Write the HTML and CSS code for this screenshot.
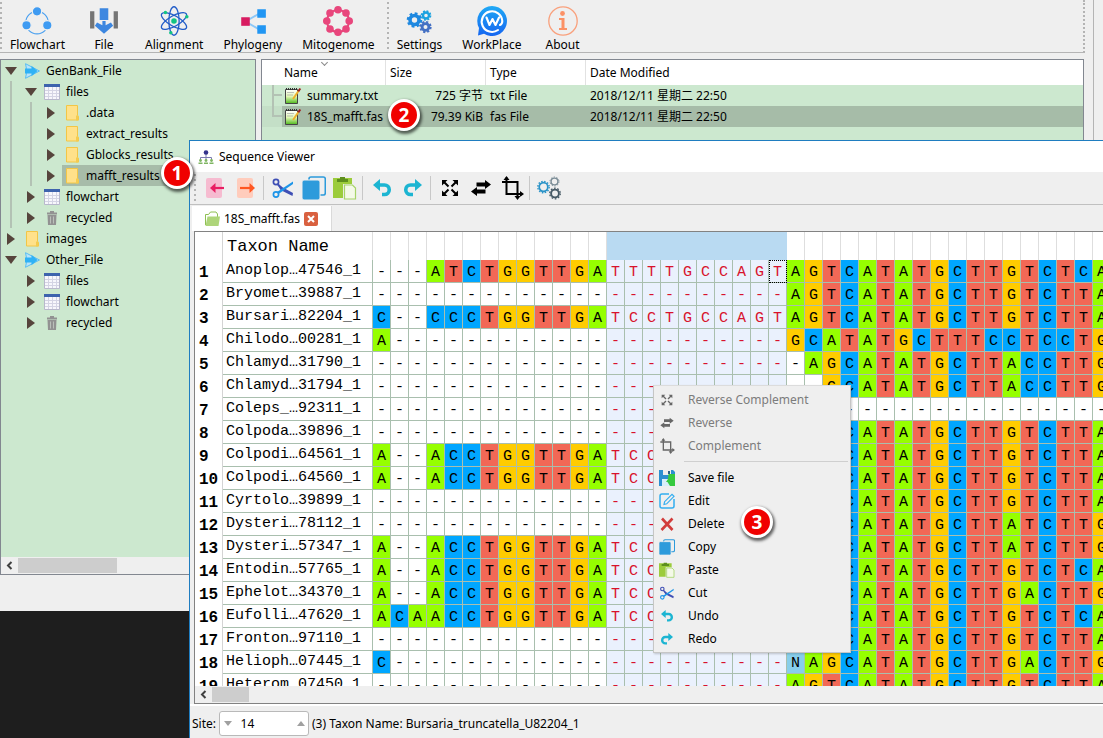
FILE: index.html
```html
<!DOCTYPE html>
<html lang="en">
<head>
<meta charset="utf-8">
<title>Sequence Viewer</title>
<link rel="stylesheet" href="styles.css">
</head>
<body>
<svg class="sprite" aria-hidden="true">
  <defs>
    <linearGradient id="g-blue" x1="0" y1="0" x2="0" y2="1"><stop offset="0" stop-color="#1fa9f5"/><stop offset="1" stop-color="#1666f0"/></linearGradient>
    <linearGradient id="g-note" x1="0" y1="0" x2="0" y2="1"><stop offset="0" stop-color="#ffffff"/><stop offset=".5" stop-color="#e2f7b4"/><stop offset="1" stop-color="#4db81c"/></linearGradient>
  </defs>
  <symbol id="i-flow" viewBox="0 0 28 28"><circle cx="14" cy="15.500" r="10.500" fill="none" stroke="#4aa0f0" stroke-width="1"/><g fill="#3f9bf2" stroke="#efefef" stroke-width="1.200"><circle cx="14" cy="5" r="4.400"/><circle cx="4.200" cy="18" r="4.400"/><circle cx="23.600" cy="18" r="4.400"/></g></symbol>
  <symbol id="i-import" viewBox="0 0 28 28"><path fill="#757575" d="M1 5h4v16H1zM23 5h4v16h-4z"/><path fill="#3d87e0" d="M10 2h8v11h-8zM12.500 14h3v4l5-2.500 2 3L14 26l-8.500-7.500 2-3 5 2.500z"/></symbol>
  <symbol id="i-atom" viewBox="0 0 28 28"><g fill="none" stroke="#1f5bc8" stroke-width="1.200"><ellipse cx="14" cy="14" rx="4.800" ry="13.300"/><ellipse cx="14" cy="14" rx="4.800" ry="13.300" transform="rotate(60 14 14)"/><ellipse cx="14" cy="14" rx="4.800" ry="13.300" transform="rotate(120 14 14)"/></g><g fill="#12c483"><circle cx="14" cy="14" r="2.600"/><circle cx="6" cy="6" r="1.600"/><circle cx="26" cy="10" r="1.600"/><circle cx="11" cy="25" r="1.600"/></g></symbol>
  <symbol id="i-share" viewBox="0 0 28 28"><path d="M7 14.500 20 7M7 14.500 20 22" stroke="#8cc7f7" stroke-width="1.800"/><path fill="#d81b60" d="M3 10.500h8v8H3z"/><path fill="#2196f3" d="M18 3h8v8h-8zM18 18h8v8h-8z"/></symbol>
  <symbol id="i-ring" viewBox="0 0 30 30"><circle cx="15" cy="15" r="11" fill="none" stroke="#e8467c" stroke-width="2"/><g fill="#e8467c"><circle cx="15" cy="3.800" r="3.800"/><circle cx="23" cy="7" r="3.800"/><circle cx="26.200" cy="15" r="3.800"/><circle cx="23" cy="23" r="3.800"/><circle cx="15" cy="26.200" r="3.800"/><circle cx="7" cy="23" r="3.800"/><circle cx="3.800" cy="15" r="3.800"/><circle cx="7" cy="7" r="3.800"/></g></symbol>
  <symbol id="i-gears" viewBox="0 0 30 30"><g fill="none"><circle cx="10.500" cy="14" r="4.500" stroke="#1e88e0" stroke-width="3.600"/><circle cx="10.500" cy="14" r="6.700" stroke="#1e88e0" stroke-width="2.200" stroke-dasharray="2.800 2.462"/><circle cx="22" cy="9.500" r="3" stroke="#1aa2e0" stroke-width="2.400"/><circle cx="22" cy="9.500" r="4.500" stroke="#1aa2e0" stroke-width="1.700" stroke-dasharray="1.900 1.634"/><circle cx="21.500" cy="21" r="3.400" stroke="#4470c4" stroke-width="2.800"/><circle cx="21.500" cy="21" r="5.200" stroke="#4470c4" stroke-width="1.900" stroke-dasharray="2.200 1.884"/></g></symbol>
  <symbol id="i-work" viewBox="0 0 30 30"><path fill="url(#g-blue)" d="M15 0a15 15 0 1 1-8 27.700L1 29.500l1-7.500A15 15 0 0 1 15 0z"/><path fill="none" stroke="#fff" stroke-width="2.100" stroke-linecap="round" stroke-linejoin="round" d="M21 24A10.300 10.300 0 1 1 25.300 15q0 3-2.300 4M9.500 11.500l3 7.500 3-6 3 6 3.500-7.500"/></symbol>
  <symbol id="i-info" viewBox="0 0 30 30"><circle cx="15" cy="15" r="14.200" fill="none" stroke="#f9a07c" stroke-width="1.300"/><circle cx="14.500" cy="7.500" r="2.400" fill="#fb9166"/><path fill="#fb9166" d="M11 12h5.500v10H19v2h-8v-2h2.500v-8H11z"/></symbol>
  <symbol id="i-project" viewBox="0 0 16 16"><path fill="#b8e4fb" stroke="#58bdf3" d="M1.500.700 15.500 8l-14 7.300.8-4.300v-6z"/><path fill="#2fb2f5" d="M1 5.500h6.500V2.800L13.500 8l-6 5.200v-2.700H1z"/></symbol>
  <symbol id="i-table" viewBox="0 0 16 16"><path fill="#f7f7fc" stroke="#b8b8cc" d="M.500.500h15v15H.500z"/><path stroke="#d4d4e4" d="M4.500 3v12M8.500 3v12M12.500 3v12M1 6.500h14M1 9.500h14M1 12.500h14"/><path fill="#3d63ad" d="M0 0h16v3H0z"/></symbol>
  <symbol id="i-folder" viewBox="0 0 16 16"><path fill="#ffe18a" stroke="#f2c646" d="M2.500.500h11v10l1 1v3.500h-12z"/><path fill="#f4cc50" d="M12 10.500h2.500v5H12z"/></symbol>
  <symbol id="i-trash" viewBox="0 0 16 16"><path fill="#929292" d="M3 2.500h10v2H3zM6 1h4v2H6zM3.500 5h9l-.500 10h-8z"/><path stroke="#c4ccc4" d="M6.500 6.500v7M9.500 6.500v7" stroke-width=".8"/></symbol>
  <symbol id="i-note" viewBox="0 0 18 18"><path fill="url(#g-note)" stroke="#444" d="M1.500 2.500h12v14h-12z"/><path stroke="#333" stroke-dasharray="1 1" stroke-width="2" d="M2 2h11"/><path stroke="#a5a5a5" stroke-width=".7" d="M3 5.500h7M3 8h6"/><path stroke="#efb12c" stroke-width="2" d="m9 12 5.500-8"/><path stroke="#9c2020" stroke-width="2" d="m14.300 4.300 2-2.800"/></symbol>
  <symbol id="i-tree" viewBox="0 0 16 16"><path fill="none" stroke="#7a7ab0" d="M8 4v7M2.500 11V8.500h11V11"/><circle cx="8" cy="3.500" r="2.300" fill="#34338c"/><g fill="#7fb562"><circle cx="2.500" cy="11.500" r="1.400"/><circle cx="8" cy="11.500" r="1.400"/><circle cx="13.500" cy="11.500" r="1.400"/><path d="M.500 13.500h4V15h-4zM6 13.500h4V15H6zM11.500 13.500h4V15h-4z"/></g></symbol>
  <symbol id="i-left" viewBox="0 0 24 24"><rect x="3" y="2" width="16" height="20" rx="2" fill="#f6bbd0"/><path fill="none" stroke="#e91e63" stroke-width="2.200" d="M21 12H9"/><path fill="#e91e63" d="M12.500 7v10L7 12z"/></symbol>
  <symbol id="i-right" viewBox="0 0 24 24"><rect x="3" y="2" width="16" height="20" rx="2" fill="#ffccbc"/><path fill="none" stroke="#ff5722" stroke-width="2.200" d="M6 12h12"/><path fill="#ff5722" d="M15.500 7v10l5.500-5z"/></symbol>
  <symbol id="i-cut" viewBox="0 0 24 24"><path fill="#3f4fb5" d="m6.500 8.500 15.500 8.500-.500 3L9.500 14z"/><path fill="#1e95e8" d="M22 5.500 6 16l1.500 2L22 8z"/><circle cx="5" cy="6" r="2.600" fill="none" stroke="#3f4fb5" stroke-width="1.700"/><circle cx="5" cy="18.500" r="2.600" fill="none" stroke="#1e95e8" stroke-width="1.700"/><path stroke="#3f4fb5" stroke-width="2" d="m6.500 8 4 4"/></symbol>
  <symbol id="i-copy" viewBox="0 0 24 24"><rect x="7" y="1" width="16.300" height="18" rx="2" fill="#efefef" stroke="#2d9bdb" stroke-width="1.600"/><rect x="0" y="4" width="18" height="20" rx="2" fill="#2d9bdb" stroke="#efefef" stroke-width="1"/></symbol>
  <symbol id="i-paste" viewBox="0 0 24 24"><path fill="#9ccc3c" d="M0 2h19v6h-9v14H0z"/><path fill="#5e8f1e" d="M4 3h3V1h5v2h3v3H4z"/><path fill="#f4f9e8" stroke="#a6d468" stroke-width="1.200" d="M11.500 9h8l3 3v11h-11z"/></symbol>
  <symbol id="i-undo" viewBox="0 0 24 24"><path fill="none" stroke="#1cb5d2" stroke-width="3.600" d="M7 9h7.500a4.700 4.700 0 0 1 0 9.500H12"/><path fill="#1cb5d2" d="M10 3v12L3 9z"/></symbol>
  <symbol id="i-redo" viewBox="0 0 24 24"><path fill="none" stroke="#1cb5d2" stroke-width="3.600" d="M17 9H9.500a4.700 4.700 0 0 0 0 9.500H12"/><path fill="#1cb5d2" d="M14 3v12l7-6z"/></symbol>
  <symbol id="i-expand" viewBox="0 0 24 24"><path stroke="currentColor" stroke-width="2" d="m6 6 4.500 4.500M18 6l-4.500 4.500M6 18l4.500-4.500M18 18l-4.500-4.500"/><path fill="currentColor" d="M4 4h5.500L4 9.500zM20 4h-5.500L20 9.500zM4 20h5.500L4 14.500zM20 20h-5.500l5.500-5.500z"/></symbol>
  <symbol id="i-swap" viewBox="0 0 24 24"><path fill="currentColor" d="M22 8.500 16 4v2.500H7.500v4H16V13zM2 15.500l6 4.500v-2.500h8.500v-4H8V11z"/></symbol>
  <symbol id="i-crop" viewBox="0 0 24 24"><path fill="none" stroke="currentColor" stroke-width="2" d="M6.500 1.500v16.500H22M2 6h15.500v16"/><path fill="currentColor" d="m6.500 0 3 4h-6zM24 18l-4-3v6zM17.500 24l-3-4h6z"/></symbol>
  <symbol id="i-cogs" viewBox="0 0 24 24"><g fill="none"><circle cx="6.500" cy="11" r="4.300" stroke="#2a93c8" stroke-width="1.700"/><circle cx="6.500" cy="11" r="5.700" stroke="#2a93c8" stroke-width="1.400" stroke-dasharray="1.500 1.480"/><circle cx="17.500" cy="5.500" r="3.400" stroke="#7a8c96" stroke-width="1.400"/><circle cx="17.500" cy="5.500" r="4.500" stroke="#7a8c96" stroke-dasharray="1.400 1.430"/><circle cx="18" cy="17.500" r="3.900" stroke="#475a66" stroke-width="1.900"/><circle cx="18" cy="17.500" r="5.300" stroke="#475a66" stroke-width="1.300" stroke-dasharray="1.700 1.630"/></g></symbol>
  <symbol id="i-open" viewBox="0 0 16 16"><path fill="#fff" stroke="#8ec053" d="M1.500 14V3.500h3L6.500 1H12l1.500 2v3"/><path fill="#aed57a" d="M3.500 5.500H16l-1.500 9.500H1.500z"/></symbol>
  <symbol id="i-save" viewBox="0 0 16 16"><path fill="#2b8fd0" d="M0 0h14l2 2v14H0z"/><path fill="#eee" d="M4 0h8v5H4z"/><path fill="#2b5f86" d="M9 1h2v3H9z"/><path fill="#d8eef8" d="M3 9h9v7H3z"/><path fill="#36c93f" d="M9.500 4H16v12h-5l-2.500-4H7l2-3z"/></symbol>
  <symbol id="i-edit" viewBox="0 0 16 16"><path fill="none" stroke="#33aef0" stroke-width="1.500" d="M10 1H3a2 2 0 0 0-2 2v10a2 2 0 0 0 2 2h10a2 2 0 0 0 2-2V6"/><path fill="none" stroke="#33aef0" stroke-width="1.200" d="M5 11.500 5.600 8.700 13 1.300l2 2-7.300 7.500z"/></symbol>
  <symbol id="i-del" viewBox="0 0 16 16"><path stroke="#d23c3a" stroke-width="2.600" d="m3 2.500 10.500 11.500M13.500 2.500 2.500 14"/></symbol>
</svg>

<main class="desktop">
  <section class="app" aria-label="Workspace">
    <nav class="appbar">
      <span class="grip"></span>
      <button class="tool"><svg><use href="#i-flow"/></svg>Flowchart</button>
      <button class="tool tool-file"><svg><use href="#i-import"/></svg>File</button>
      <button class="tool"><svg><use href="#i-atom"/></svg>Alignment</button>
      <button class="tool"><svg><use href="#i-share"/></svg>Phylogeny</button>
      <button class="tool"><svg><use href="#i-ring"/></svg>Mitogenome</button>
      <span class="grip"></span>
      <button class="tool"><svg><use href="#i-gears"/></svg>Settings</button>
      <button class="tool"><svg><use href="#i-work"/></svg>WorkPlace</button>
      <button class="tool tool-about"><svg><use href="#i-info"/></svg>About</button>
    </nav>
    <div class="panes">
      <aside class="sidebar">
        <ul class="tree">
          <li><div class="node open"><span class="label"><svg><use href="#i-project"/></svg>GenBank_File</span></div>
            <ul class="guide">
              <li><div class="node open"><span class="label"><svg><use href="#i-table"/></svg>files</span></div>
                <ul class="guide">
                  <li><div class="node"><span class="label"><svg><use href="#i-folder"/></svg>.data</span></div></li>
                  <li><div class="node"><span class="label"><svg><use href="#i-folder"/></svg>extract_results</span></div></li>
                  <li><div class="node"><span class="label"><svg><use href="#i-folder"/></svg>Gblocks_results</span></div></li>
                  <li><div class="node current"><span class="label"><svg><use href="#i-folder"/></svg>mafft_results</span></div></li>
                </ul></li>
              <li><div class="node"><span class="label"><svg><use href="#i-table"/></svg>flowchart</span></div></li>
              <li><div class="node"><span class="label"><svg><use href="#i-trash"/></svg>recycled</span></div></li>
            </ul></li>
          <li><div class="node"><span class="label"><svg><use href="#i-folder"/></svg>images</span></div></li>
          <li><div class="node open"><span class="label"><svg><use href="#i-project"/></svg>Other_File</span></div>
            <ul>
              <li><div class="node"><span class="label"><svg><use href="#i-table"/></svg>files</span></div></li>
              <li><div class="node"><span class="label"><svg><use href="#i-table"/></svg>flowchart</span></div></li>
              <li><div class="node"><span class="label"><svg><use href="#i-trash"/></svg>recycled</span></div></li>
            </ul></li>
        </ul>
        <div class="hscroll"><svg viewBox="0 0 17 17"><path d="M10.500 5 7 8.500l3.500 3.500"/></svg><span class="thumb thumb-tree"></span></div>
      </aside>
      <div class="filelist">
        <table class="files">
          <thead><tr><th class="c-name">Name<span class="sort"></span></th><th class="c-size">Size</th><th class="c-type">Type</th><th>Date Modified</th></tr></thead>
          <tbody>
            <tr><td><span class="file"><span class="branch"></span><svg><use href="#i-note"/></svg>summary.txt</span></td><td class="num">725 字节</td><td>txt File</td><td>2018/12/11 星期二 22:50</td></tr>
            <tr class="picked"><td><span class="file"><span class="branch last"></span><svg><use href="#i-note"/></svg>18S_mafft.fas</span></td><td class="num">79.39 KiB</td><td>fas File</td><td>2018/12/11 星期二 22:50</td></tr>
          </tbody>
        </table>
      </div>
    </div>
  </section>

  <section class="viewer" aria-label="Sequence Viewer">
    <header class="titlebar"><svg><use href="#i-tree"/></svg>Sequence Viewer</header>
    <div class="toolbar">
      <span class="grip"></span>
      <button aria-label="Previous"><svg><use href="#i-left"/></svg></button>
      <button aria-label="Next"><svg><use href="#i-right"/></svg></button>
      <span class="sep"></span>
      <button aria-label="Cut"><svg><use href="#i-cut"/></svg></button>
      <button aria-label="Copy"><svg><use href="#i-copy"/></svg></button>
      <button aria-label="Paste"><svg><use href="#i-paste"/></svg></button>
      <span class="sep"></span>
      <button aria-label="Undo"><svg><use href="#i-undo"/></svg></button>
      <button aria-label="Redo"><svg><use href="#i-redo"/></svg></button>
      <span class="sep"></span>
      <button aria-label="Reverse Complement"><svg><use href="#i-expand"/></svg></button>
      <button aria-label="Reverse"><svg><use href="#i-swap"/></svg></button>
      <button aria-label="Complement"><svg><use href="#i-crop"/></svg></button>
      <span class="sep"></span>
      <button aria-label="Settings"><svg><use href="#i-cogs"/></svg></button>
    </div>
    <div class="tabs">
      <div class="tab"><svg><use href="#i-open"/></svg>18S_mafft.fas<button class="close" aria-label="Close tab"><svg viewBox="0 0 14 14"><path d="m4 4 6 6M10 4l-6 6"/></svg></button></div>
    </div>
    <div class="sheet">
      <div class="grid"><table class="seq" id="seq"></table></div>
      <div class="hscroll"><svg viewBox="0 0 17 17"><path d="M10.500 5 7 8.500l3.500 3.500"/></svg><span class="thumb thumb-seq"></span></div>
    </div>
    <footer class="status">
      <label for="site">Site:</label>
      <span class="spin"><button class="down" aria-label="Decrease"></button><input id="site" type="text" value="14"><button class="up" aria-label="Increase"></button></span>
      <span>(3) Taxon Name: Bursaria_truncatella_U82204_1</span>
    </footer>
  </section>

  <div class="menu" role="menu">
    <button disabled><svg><use href="#i-expand"/></svg>Reverse Complement</button>
    <button disabled><svg><use href="#i-swap"/></svg>Reverse</button>
    <button disabled><svg><use href="#i-crop"/></svg>Complement</button>
    <hr>
    <button><svg><use href="#i-save"/></svg>Save file</button>
    <button><svg><use href="#i-edit"/></svg>Edit</button>
    <button><svg><use href="#i-del"/></svg>Delete</button>
    <button><svg><use href="#i-copy"/></svg>Copy</button>
    <button><svg><use href="#i-paste"/></svg>Paste</button>
    <button><svg><use href="#i-cut"/></svg>Cut</button>
    <button><svg><use href="#i-undo"/></svg>Undo</button>
    <button><svg><use href="#i-redo"/></svg>Redo</button>
  </div>

  <span class="step step-1">1</span>
  <span class="step step-2">2</span>
  <span class="step step-3">3</span>
</main>
<script src="app.js"></script>
</body>
</html>
```
FILE: styles.css
```css
* { box-sizing: border-box; }
body { margin: 0; font: 12px/21px "Noto Sans", "Noto Sans CJK SC", sans-serif; color: #000; }
button { border: 0; padding: 0; background: none; font: inherit; color: inherit; }
ul { list-style: none; margin: 0; padding: 0; }
table { border-spacing: 0; }
svg { flex: none; }
.sprite { position: absolute; width: 0; height: 0; }

.desktop { position: relative; height: 100vh; overflow: hidden; background: #1e1e1e; }

/* workspace window */
.app { position: absolute; inset: 0 0 127px 0; display: flex; flex-direction: column; padding-right: 9px; background: linear-gradient(#b4b4b4, #b4b4b4) calc(100% - 9px) 0 / 1px 100% no-repeat #efefef; }
.appbar { display: flex; align-items: stretch; height: 53px; padding-top: 2px; border-bottom: 1px solid #b4b4b4; border-right: 2px dotted #b4b4b4; margin-right: 9px; }
.grip { width: 2px; background: repeating-linear-gradient(#b4b4b4 0 2px, transparent 2px 5px); }
.tool { display: flex; flex-direction: column; align-items: center; justify-content: space-between; padding: 4px 12px 0 8px; line-height: 17px; }
.tool svg { width: 30px; height: 30px; }
.tool-file { padding: 4px 18px 0 12px; }
.tool-about { padding-left: 12px; }
.panes { flex: 1; display: flex; gap: 5px; min-height: 0; padding: 6px 10px 36px 0; }

.sidebar { width: 256px; display: flex; flex-direction: column; border: 1px solid #828790; background: #cce8cf; }
.tree { flex: 1; }
.tree ul { padding-left: 20px; }
.guide { background: linear-gradient(#b3c2b4, #b3c2b4) 9px 0 / 2px 100% no-repeat; }
.node { display: flex; height: 21px; }
.node::before { content: ""; align-self: center; margin: 0 7px 0 6px; border: solid transparent; border-width: 6px 0 6px 8px; border-left-color: #56443c; }
.node.open::before { margin: 0 5px 0 4px; border-width: 8px 6px 0; border-top-color: #56443c; border-left-color: transparent; }
.label { flex: 1; display: flex; align-items: center; gap: 6px; padding-left: 2px; }
.label svg { width: 16px; height: 16px; }
.current .label { background: #a7bca9; }

.hscroll { display: flex; align-items: center; height: 17px; background: #efefef; }
.hscroll svg { width: 17px; height: 17px; fill: none; stroke: #404040; stroke-width: 2; }
.thumb { height: 15px; background: #cdcdcd; }
.thumb-tree { width: 99px; }
.thumb-seq { width: 37px; }

.filelist { flex: 1; border: 1px solid #828790; background: #cce8cf; }
.files { width: 100%; table-layout: fixed; }
.files th { position: relative; height: 25px; padding: 0 4px; border-right: 1px solid #e2e2e2; background: #fff; font-weight: 400; text-align: left; }
.files th:last-child { border: 0; }
.files .c-name { width: 124px; padding-left: 22px; }
.c-size, .c-type { width: 100px; }
.sort { position: absolute; top: 0; left: 60px; width: 5px; height: 5px; border: solid #8a8a8a; border-width: 0 1px 1px 0; transform: rotate(45deg); }
.files td { height: 21px; padding: 0 3px 0 4px; white-space: nowrap; }
.files td:first-child { padding: 0; }
.files .num { text-align: right; }
.picked td { background: #a6bca8; }
.file { display: flex; align-items: center; }
.file svg { width: 18px; height: 18px; margin: 0 5px 0 2px; }
.branch { align-self: stretch; width: 20px; background: linear-gradient(#b3c2b4, #b3c2b4) 10px 0 / 2px 100% no-repeat, linear-gradient(#b3c2b4, #b3c2b4) 10px 9px / 10px 2px no-repeat; }
.branch.last { background: linear-gradient(#b3c2b4, #b3c2b4) 10px 0 / 2px 10px no-repeat, linear-gradient(#b3c2b4, #b3c2b4) 10px 9px / 10px 2px no-repeat, #c4dfc7; }

/* sequence viewer window */
.viewer { position: absolute; inset: 140px 0 0 189px; display: flex; flex-direction: column; border: solid #1f7dc0; border-width: 1px 0 0 1px; background: #efefef; }
.titlebar { display: flex; align-items: center; gap: 5px; height: 31px; padding-left: 8px; background: #fff; }
.titlebar svg { width: 16px; height: 16px; }
.toolbar { display: flex; align-items: center; height: 33px; padding-left: 4px; border-bottom: 1px solid #c0c0c0; }
.toolbar .grip { height: 29px; margin-right: 3px; }
.toolbar button { width: 31px; height: 24px; display: grid; place-items: center; }
.toolbar svg { width: 24px; height: 24px; }
.toolbar .sep { width: 1px; height: 24px; margin: 0 3px 0 2px; background: #c8c8c8; }
.tabs { display: flex; height: 26px; padding: 1px 0 0 2px; }
.tab { display: flex; align-items: center; gap: 4px; padding: 0 13px 0 12px; border-right: 1px solid #dadada; background: #fff; }
.tab > svg { width: 16px; height: 16px; }
.close { width: 14px; height: 14px; border-radius: 2px; background: #d9603f; }
.close svg { display: block; stroke: #fff; stroke-width: 2; }
.sheet { flex: 1; display: flex; flex-direction: column; min-height: 0; margin-left: 4px; border: solid #828282; border-width: 1px 0 1px 1px; background: #fff; }
.grid { flex: 1; min-height: 0; overflow: hidden; }
.status { display: flex; align-items: center; gap: 3px; height: 34px; padding: 2px 0 0 2px; border-top: 2px solid #fff; }
.spin { display: flex; align-items: center; justify-content: space-between; width: 90px; height: 25px; padding: 0 3px 0 4px; border: 1px solid #b9b9b9; border-radius: 3px; background: #fff; }
.spin input { width: 64px; padding: 0 0 0 8px; border: 0; background: none; font: inherit; }
.spin button { flex: none; border: solid transparent; border-width: 0 4px; }
.spin .down { border-top: 5px solid #a0a0a0; }
.spin .up { border-bottom: 5px solid #a0a0a0; }

.seq { table-layout: fixed; width: 916px; font: 15px/20px "Liberation Mono", monospace; }
.seq th { font-weight: 400; padding: 0; }
.seq thead th { width: 18px; height: 28px; border-right: 1px solid #dedede; }
.seq thead .n, .seq .n { width: 28px; border-right: 1px solid #d4d4d4; }
.seq thead .taxon { width: 150px; padding: 2px 0 0 4px; font-size: 17px; text-align: left; }
.seq thead .s { background: #b9daf2; border-color: #b9daf2; }
.seq tbody .n { padding: 2px 3px 0 4px; font-weight: 700; font-size: 16px; text-align: left; }
.seq .name { padding: 0 0 1px 3px; border: solid #a9bfae; border-width: 0 1px 1px 0; text-align: left; line-height: 18px; white-space: nowrap; }
.seq td { height: 23px; padding: 3px 0 0; border: solid #a9bfae; border-width: 0 1px 1px 0; text-align: center; line-height: 19px; }
.seq .A { background: #96ff00; }
.seq .T { background: #f26856; }
.seq .C { background: #00a6ff; }
.seq .G { background: #ffcc00; }
.seq .N { background: #87ceeb; }
.seq td.s { background: #eaf1fd; color: #d8122c; }
.seq td.focus { outline: 1px dotted #000; outline-offset: -1px; }

/* context menu */
.menu { position: absolute; left: 653px; top: 385px; width: 198px; padding: 2px; border: 1px solid #c6c6c6; border-top-color: #dcdcdc; background: #efefef; box-shadow: 1px 1px 2px #0003; }
.menu button { display: flex; align-items: center; gap: 13px; width: 100%; height: 23px; padding-left: 3px; }
.menu svg { width: 16px; height: 16px; }
.menu button:disabled { color: #7c7c7c; }
.menu button:disabled svg { color: #666; }
.menu hr { height: 1px; margin: 4px 0 4px 28px; border: 0; background: #cfcfcf; }

/* numbered callouts */
.step { position: absolute; display: grid; place-items: center; width: 32px; height: 32px; border: 3px solid #fff; border-radius: 50%; background: #f00000; color: #fff; font: 700 19px/1 "Open Sans", sans-serif; box-shadow: 1px 2px 3px 1px #0009; }
.step-1 { left: 161px; top: 157px; }
.step-2 { left: 388px; top: 99px; }
.step-3 { left: 741px; top: 506px; }
```
FILE: app.js
```javascript
const gap = n => "-".repeat(n);
const SEL_FROM = 13, SEL_TO = 22, COLUMNS = 41;

const rows = [
  ["Anoplop…47546_1", "---ATCTGGTTGA" + "TTTTGCCAGT" + "AGTCATATGCTTGTCTCA"],
  ["Bryomet…39887_1", gap(23) + "AGTCATATGCTTGTCTTA"],
  ["Bursari…82204_1", "C--CCCTGGTTGA" + "TCCTGCCAGT" + "AGTCATATGCTTGTCTTA"],
  ["Chilodo…00281_1", "A" + gap(22) + "GCATATGCTTTCCTCCTG"],
  ["Chlamyd…31790_1", gap(24) + "AGCATATGCTTACCTTG"],
  ["Chlamyd…31794_1", gap(25) + "GCATATGCTTACCTTG"],
  ["Coleps_…92311_1", gap(41)],
  ["Colpoda…39896_1", gap(23) + "AGTCATATGCTTGTCTTA"],
  ["Colpodi…64561_1", "A--ACCTGGTTGA" + "TCCTGCCAGT" + "AGTCATATGCTTGTCTTA"],
  ["Colpodi…64560_1", "A--ACCTGGTTGA" + "TCCTGCCAGT" + "AGTCATATGCTTGTCTTA"],
  ["Cyrtolo…39899_1", gap(23) + "AGTCATATGCTTGTCTTA"],
  ["Dysteri…78112_1", gap(23) + "AGTCATATGCTTATCTTG"],
  ["Dysteri…57347_1", "A--ACCTGGTTGA" + "TCCTGCCAGT" + "AGTCATATGCTTATCTTG"],
  ["Entodin…57765_1", "A--ACCTGGTTGA" + "TCCTGCCAGT" + "AGTCATATGCTTGTCTCA"],
  ["Ephelot…34370_1", "A--ACCTGGTTGA" + "TCCTGCCAGT" + "AGTCATATGCTTGACTTG"],
  ["Eufolli…47620_1", "ACAACCTGGTTGA" + "TCCTGCCAGT" + "AGTCATATGCTTGTCTCA"],
  ["Fronton…97110_1", gap(23) + "AGTCATATGCTTGTCTTA"],
  ["Helioph…07445_1", "C" + gap(22) + "NAGCATATGCTTGACTTG"],
  ["Heterom…07450_1", gap(23) + "AGTCATATGCTTGTCTTA"]
];

const selected = i => i >= SEL_FROM && i <= SEL_TO;

let html = '<thead><tr><th class="n"></th><th class="taxon">Taxon Name</th>';
for (let i = 0; i < COLUMNS; i++) html += `<th class="${selected(i) ? "s" : ""}"></th>`;
html += "</tr></thead><tbody>";
rows.forEach(([name, bases], r) => {
  html += `<tr><th class="n">${r + 1}</th><th class="name">${name}</th>`;
  [...bases].forEach((b, i) => {
    const cls = selected(i) ? "s" + (r === 0 && i === SEL_TO ? " focus" : "") : b === "-" ? "" : b;
    html += `<td class="${cls}">${b}</td>`;
  });
  html += "</tr>";
});
document.getElementById("seq").innerHTML = html + "</tbody>";
```
